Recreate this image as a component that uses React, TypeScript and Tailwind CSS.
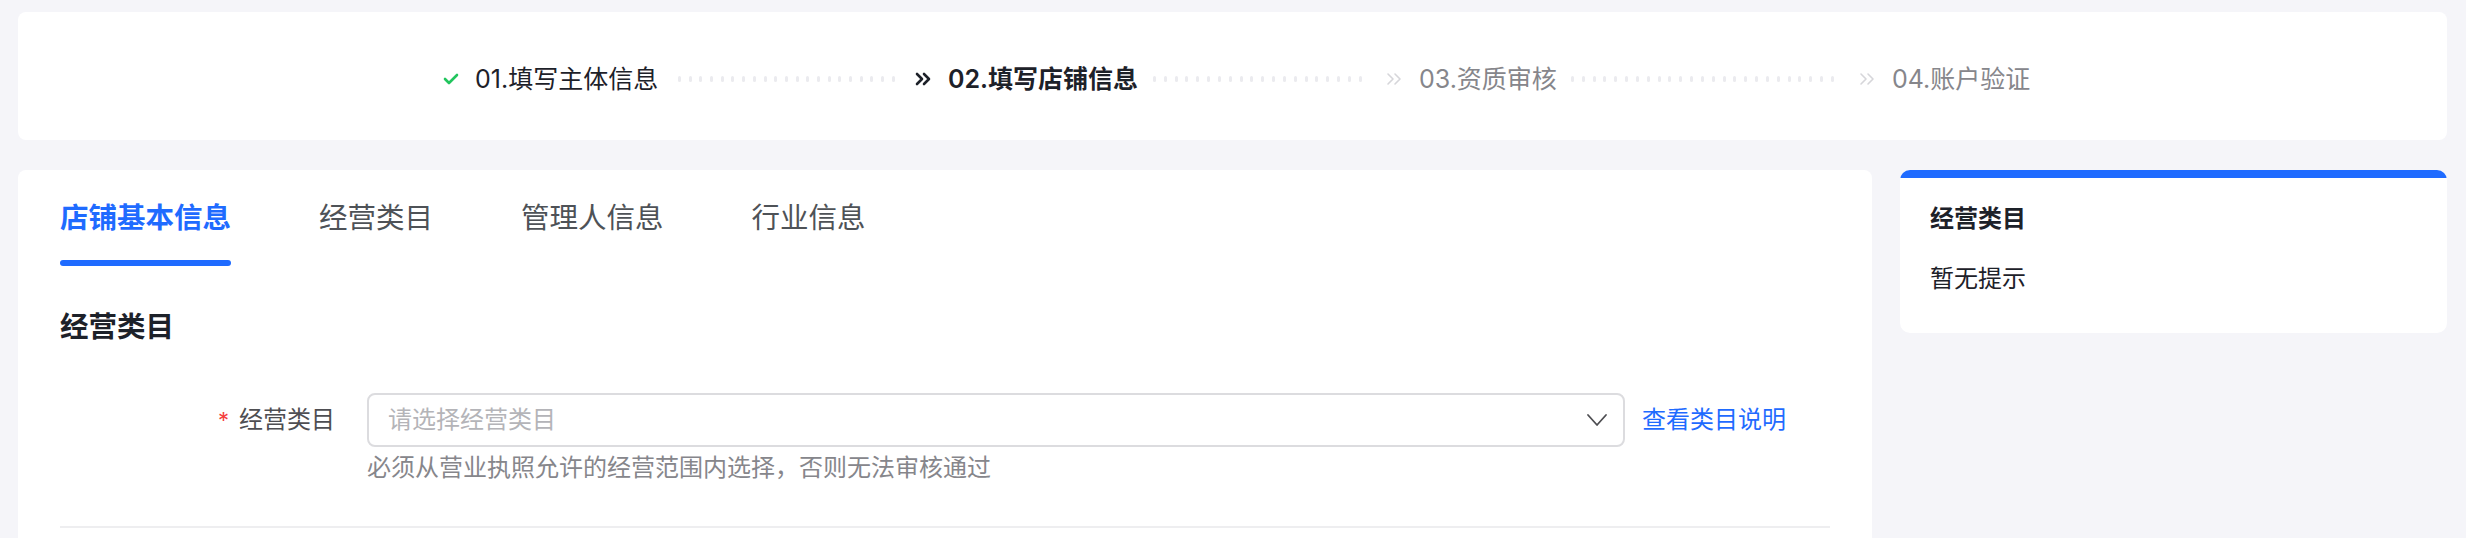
import React from "react";

const FONT = { fontFamily: 'Inter, "Noto Sans CJK SC", sans-serif' };

function Dots({ width }: { width: number }) {
  const count = Math.floor(width / 10.8) + 1;
  return (
    <div className="flex items-center justify-between h-[6px]" style={{ width }}>
      {Array.from({ length: count }).map((_, i) => (
        <span key={i} className="block w-[3px] h-[6px] rounded-full bg-[#ebebef]" />
      ))}
    </div>
  );
}

function Chevrons({ color, weight }: { color: string; weight: number }) {
  return (
    <svg width="16" height="14" viewBox="0 0 16 14" fill="none" stroke={color} strokeWidth={weight} strokeLinecap="round" strokeLinejoin="round">
      <polyline points="2,2 7,7 2,12" />
      <polyline points="9,2 14,7 9,12" />
    </svg>
  );
}

function Steps() {
  return (
    <div className="flex items-center h-full pt-[6px] pl-[425px] text-[25px] leading-[32px] whitespace-nowrap">
      <svg width="16" height="12" viewBox="0 0 16 12" fill="none" stroke="#22c55e" strokeWidth="2.6" strokeLinecap="round" strokeLinejoin="round">
        <polyline points="2,6 6,10 14,2" />
      </svg>
      <span className="ml-[16px] w-[187px] text-[#1d2129]">01.填写主体信息</span>
      <div className="ml-[16px]">
        <Dots width={217} />
      </div>
      <div className="ml-[20px]">
        <Chevrons color="#1d2129" weight={2.6} />
      </div>
      <span className="ml-[17px] w-[187px] font-semibold text-[#1d2129]">02.填写店铺信息</span>
      <div className="ml-[18px]">
        <Dots width={209} />
      </div>
      <div className="ml-[24px]">
        <Chevrons color="#d6d6da" weight={1.6} />
      </div>
      <span className="ml-[17px] w-[139px] text-[#86868b]">03.资质审核</span>
      <div className="ml-[13px]">
        <Dots width={263} />
      </div>
      <div className="ml-[25px]">
        <Chevrons color="#d6d6da" weight={1.6} />
      </div>
      <span className="ml-[17px] w-[137px] text-[#86868b]">04.账户验证</span>
    </div>
  );
}

const TABS = ["店铺基本信息", "经营类目", "管理人信息", "行业信息"];

export default function App() {
  return (
    <div className="min-h-[538px] bg-[#f5f5f9] pl-[18px] pt-[12px] pr-[19px]" style={FONT}>
      <div className="h-[128px] bg-white rounded-[8px]">
        <Steps />
      </div>

      <div className="flex mt-[30px] gap-[28px] items-start">
        <div className="w-[1854px] shrink-0 bg-white rounded-t-[8px] px-[42px] pt-[28px] pb-[60px]">
          <div className="flex gap-[88px]">
            {TABS.map((t, i) => (
              <div key={t} className="flex flex-col">
                <span
                  className={
                    i === 0
                      ? "text-[28.5px] leading-[40px] font-semibold text-[#1f6bff]"
                      : "text-[28.5px] leading-[40px] text-[#4e5257]"
                  }
                >
                  {t}
                </span>
                <span className={i === 0 ? "mt-[22px] h-[6px] rounded-full bg-[#1f6bff]" : "mt-[22px] h-[6px]"} />
              </div>
            ))}
          </div>

          <h2 className="mt-[41px] text-[28.5px] leading-[40px] font-bold text-[#1d2129]">经营类目</h2>

          <div className="mt-[46px] flex items-center">
            <div className="w-[275px] flex justify-end items-center text-[24px] leading-[32px] text-[#4e4e52]">
              <span className="text-[#f53f3f] mr-[10px] text-[22px]">*</span>
              <span>经营类目</span>
            </div>
            <div className="ml-[32px] w-[1258px] h-[54px] border-2 border-[#dcdcdf] rounded-[8px] flex items-center justify-between pl-[19px] pr-[15px]">
              <span className="text-[24px] leading-[32px] text-[#b4b4b8]">请选择经营类目</span>
              <svg width="22" height="14" viewBox="0 0 22 14" fill="none" stroke="#4e4e52" strokeWidth="1.8" strokeLinecap="round" strokeLinejoin="round">
                <polyline points="2,2 11,12 20,2" />
              </svg>
            </div>
            <span className="ml-[17px] text-[24px] leading-[32px] text-[#1f6bff] whitespace-nowrap">查看类目说明</span>
          </div>
          <p className="ml-[307px] mt-[5px] text-[24px] leading-[32px] text-[#86868b]">
            必须从营业执照允许的经营范围内选择，否则无法审核通过
          </p>

          <div className="mt-[42px] h-[2px] bg-[#eeeef0]" />
          <div className="h-[40px]" />
        </div>

        <div className="flex-1 bg-white rounded-[10px] overflow-hidden">
          <div className="h-[8px] bg-[#1f6bff]" />
          <div className="px-[30px] pt-[25px] pb-[38px]">
            <div className="text-[24px] leading-[32px] font-semibold text-[#1d2129]">经营类目</div>
            <div className="mt-[28px] text-[24px] leading-[32px] text-[#1d2129]">暂无提示</div>
          </div>
        </div>
      </div>
    </div>
  );
}
